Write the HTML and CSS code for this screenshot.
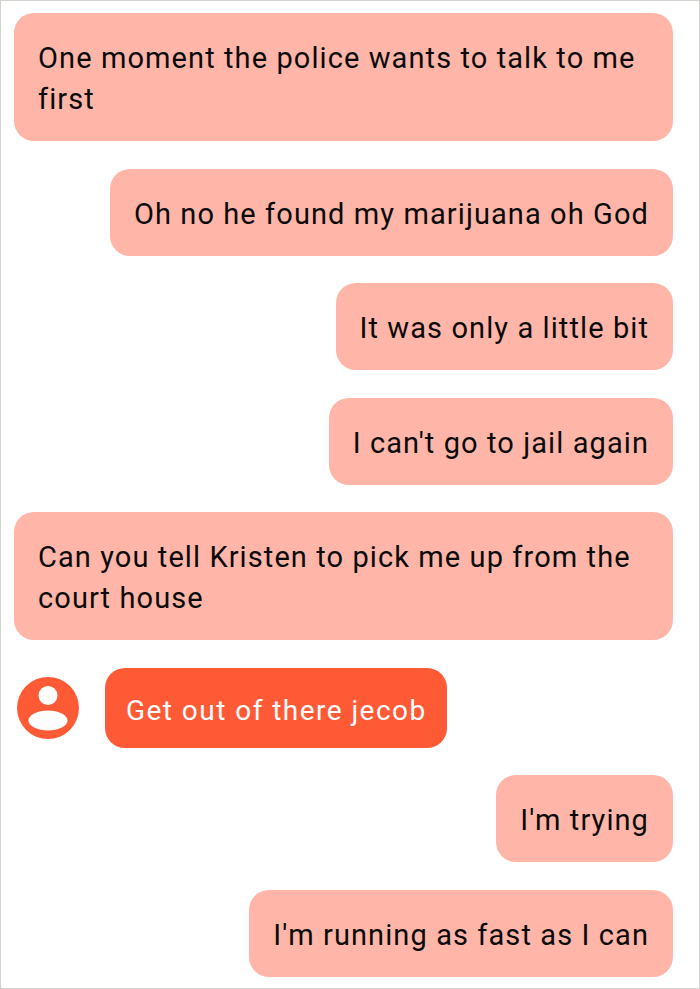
FILE: index.html
```html
<!DOCTYPE html>
<html lang="en">
<head>
<meta charset="utf-8">
<title>Messages</title>
<link rel="stylesheet" href="styles.css">
</head>
<body>
<main class="thread">
  <div class="row"><p class="bubble wide">One moment the police wants to talk to me first</p></div>
  <div class="row"><p class="bubble">Oh no he found my marijuana oh God</p></div>
  <div class="row"><p class="bubble">It was only a little bit</p></div>
  <div class="row"><p class="bubble">I can't go to jail again</p></div>
  <div class="row"><p class="bubble wide">Can you tell Kristen to pick me up from the court house</p></div>
  <div class="row incoming">
    <svg class="avatar" viewBox="0 0 62 62" aria-hidden="true">
      <circle cx="31" cy="31" r="31" fill="#ff5a36"/>
      <circle cx="31" cy="18.5" r="9.5" fill="#fff"/>
      <ellipse cx="31" cy="43.5" rx="19.5" ry="10" fill="#fff"/>
    </svg>
    <p class="bubble reply">Get out of there jecob</p>
  </div>
  <div class="row"><p class="bubble">I'm trying</p></div>
  <div class="row"><p class="bubble">I'm running as fast as I can</p></div>
</main>
</body>
</html>
```
FILE: styles.css
```css
html, body {
  margin: 0;
  height: 100%;
  background: #fff;
}

body {
  box-sizing: border-box;
  height: 989px;
  overflow: hidden;
  border: 1px solid #d4d4ce;
  font-family: Roboto, "Liberation Sans", sans-serif;
}

.thread {
  display: flex;
  flex-direction: column;
  gap: 27.5px;
  padding: 12px 26px 0 13px;
}

.row {
  display: flex;
  justify-content: flex-end;
}

.bubble {
  box-sizing: border-box;
  margin: 0;
  padding: 25px 24px 21px 24px;
  border-radius: 20px;
  background: #ffb6a8;
  color: #0a0a0a;
  font-size: 29px;
  line-height: 41px;
  letter-spacing: 1.09px;
}

.wide {
  width: 100%;
}

.incoming {
  justify-content: flex-start;
  align-items: center;
}

.avatar {
  flex: none;
  width: 62px;
  height: 62px;
  margin: 0 26px 0 3px;
}

.reply {
  padding: 22px 20px 17px 21px;
  background: #ff5a36;
  color: #fff;
  font-size: 28px;
  letter-spacing: 1.46px;
}
```
